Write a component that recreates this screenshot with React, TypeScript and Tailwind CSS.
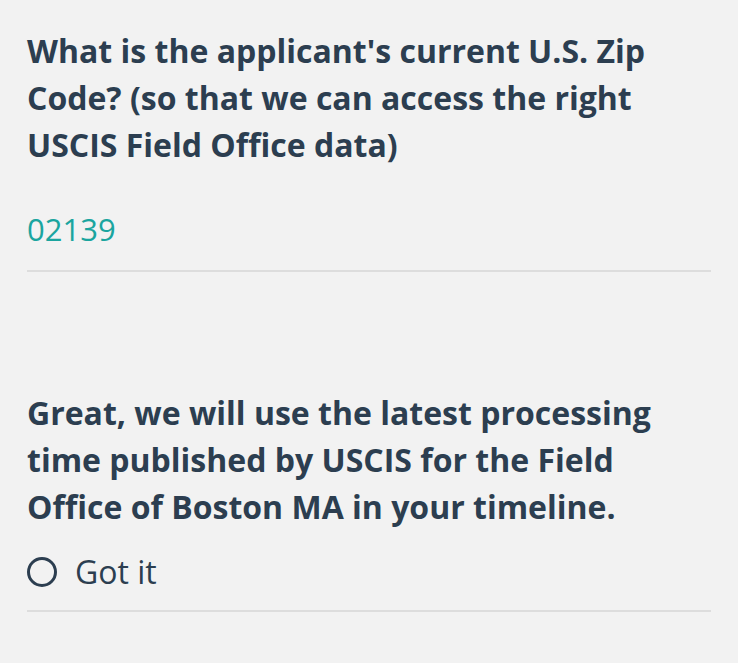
import React from 'react';

const App: React.FC = () => {
  return (
    <div className="min-h-screen w-full bg-[#f2f2f2] text-[#2c3e50] [font-family:'Open_Sans',sans-serif]">
      <div className="px-[27px] pt-[27px]">
        {/* Zip question */}
        <div className="border-b-2 border-[#dddddd]">
          <h2 className="text-[32px] font-bold leading-[47px]">
            What is the applicant's current U.S. Zip Code? (so that we can access the right USCIS Field Office data)
          </h2>
          <div className="mt-[41px] pb-[21px] text-[31px] leading-[40px] text-[#1ba59f]">02139</div>
        </div>

        {/* Confirmation */}
        <div className="mt-[117px] border-b-2 border-[#dddddd]">
          <h2 className="text-[32px] font-bold leading-[47px]">
            Great, we will use the latest processing time published by USCIS for the Field Office of Boston MA in your timeline.
          </h2>
          <label className="mt-[22px] mb-[18px] flex items-center gap-[18px]">
            <span className="h-[30px] w-[30px] rounded-full border-[3px] border-[#2c3e50]" />
            <span className="text-[32px] leading-[40px]">Got it</span>
          </label>
        </div>
      </div>
    </div>
  );
};

export default App;
